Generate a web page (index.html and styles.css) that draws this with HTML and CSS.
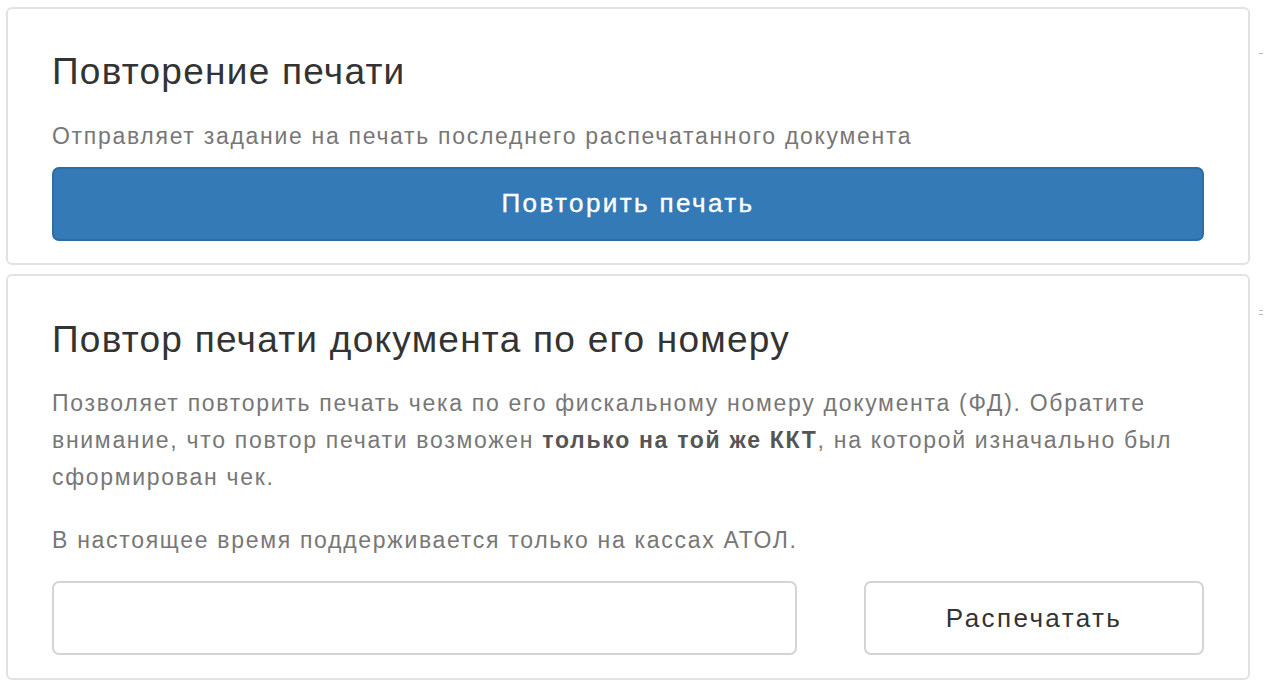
FILE: index.html
```html
<!DOCTYPE html>
<html lang="ru">
<head>
    <meta charset="UTF-8">
    <meta name="viewport" content="width=device-width, initial-scale=1.0">
    <title>Повтор печати</title>
    <link rel="stylesheet" href="styles.css">
</head>
<body>
    <div class="page">
        <div class="content">
            <div class="panel panel-first">
                <h3>Повторение печати</h3>
                <p class="desc">Отправляет задание на печать последнего распечатанного документа</p>
                <button type="button" class="btn btn-primary">Повторить печать</button>
            </div>

            <div class="panel panel-second">
                <h3>Повтор печати документа по его номеру</h3>
                <p class="note">Позволяет повторить печать чека по его фискальному номеру документа (ФД). Обратите внимание, что повтор печати возможен <b>только на той же ККТ</b>, на которой изначально был сформирован чек.</p>
                <p class="support">В настоящее время поддерживается только на кассах АТОЛ.</p>
                <div class="row">
                    <input type="text" class="form-control" id="docNumber">
                    <button type="button" class="btn btn-default">Распечатать</button>
                </div>
            </div>
        </div>

        <!-- edge of the neighbouring column -->
        <div class="side">
            <span class="mark mark-top"></span>
            <span class="mark mark-mid"></span>
            <span class="mark"></span>
        </div>
    </div>
</body>
</html>
```

FILE: styles.css
```css
body {
    font-family: "Liberation Sans", Arial, sans-serif;
    margin: 7px 0 0 6px;
    background-color: #fff;
    color: #333;
}
.page {
    display: flex;
}
.content {
    width: 1244px;
}
.side {
    display: flex;
    flex-direction: column;
    align-items: flex-start;
    padding-left: 9px;
}
.mark {
    display: block;
    width: 4px;
    height: 1px;
    background-color: #bbb;
    margin-top: 3px;
}
.mark-top {
    margin-top: 46px;
}
.mark-mid {
    margin-top: 256px;
}
.panel {
    border: 2px solid #e2e2e2;
    border-radius: 6px;
    background-color: #fff;
    padding: 43px 44px 22px 44px;
}
.panel-second {
    margin-top: 9px;
    padding-top: 44px;
    padding-bottom: 23px;
}
h3 {
    font-size: 37px;
    font-weight: normal;
    letter-spacing: 1.25px;
    line-height: 1.1;
    margin: 0 0 25px 0;
    color: #333;
}
p {
    font-size: 23px;
    letter-spacing: 1.7px;
    line-height: 37px;
    color: #777;
    margin: 0;
}
p b {
    color: #555;
}
.desc {
    margin-bottom: 12px;
}
.note {
    margin-bottom: 26px;
}
.support {
    margin-bottom: 22px;
}
.btn {
    display: block;
    width: 100%;
    height: 74px;
    font-family: inherit;
    font-size: 26px;
    letter-spacing: 2.4px;
    border-radius: 7px;
    cursor: pointer;
}
.btn-primary {
    background-color: #337ab7;
    border: 2px solid #2e6da4;
    color: #fff;
    -webkit-text-stroke: 0.4px #fff;
}
.btn-default {
    background-color: #fff;
    border: 2px solid #d4d4d4;
    color: #333;
}
.row {
    display: grid;
    grid-template-columns: 1fr 340px;
    gap: 67px;
}
.form-control {
    height: 74px;
    box-sizing: border-box;
    border: 2px solid #d4d4d4;
    border-radius: 7px;
    font-size: 22px;
    padding: 0 16px;
}
```
